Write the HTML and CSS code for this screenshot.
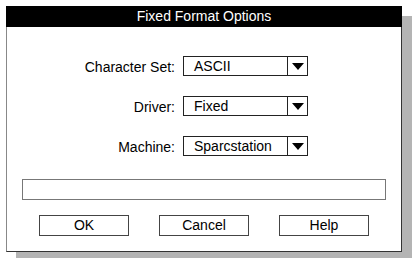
FILE: index.html
```html
<!DOCTYPE html>
<html lang="en">
<head>
  <meta charset="UTF-8" />
  <title>Fixed Format Options</title>
  <link rel="stylesheet" href="styles.css">
</head>
<body>

<div class="dialog">
  <div class="title-bar">Fixed Format Options</div>

  <div class="form">
    <label class="field-label">Character Set:</label>
    <div class="dropdown">
      <span class="dropdown-value">ASCII</span>
      <span class="dropdown-arrow">
        <svg width="12" height="7" viewBox="0 0 12 7"><polygon points="0,0 12,0 6,7" fill="#000"/></svg>
      </span>
    </div>

    <label class="field-label">Driver:</label>
    <div class="dropdown">
      <span class="dropdown-value">Fixed</span>
      <span class="dropdown-arrow">
        <svg width="12" height="7" viewBox="0 0 12 7"><polygon points="0,0 12,0 6,7" fill="#000"/></svg>
      </span>
    </div>

    <label class="field-label">Machine:</label>
    <div class="dropdown">
      <span class="dropdown-value">Sparcstation</span>
      <span class="dropdown-arrow">
        <svg width="12" height="7" viewBox="0 0 12 7"><polygon points="0,0 12,0 6,7" fill="#000"/></svg>
      </span>
    </div>
  </div>

  <div class="status-field"></div>

  <div class="buttons">
    <button class="dlg-btn">OK</button>
    <button class="dlg-btn">Cancel</button>
    <button class="dlg-btn">Help</button>
  </div>
</div>

</body>
</html>
```

FILE: styles.css
```css
body {
  font-family: "Liberation Sans", Arial, sans-serif;
  font-size: 14px;
  background: #fff;
  margin: 0;
  padding: 6px;
  color: #000;
}

.dialog {
  width: 396px;
  height: 246px;
  box-sizing: border-box;
  background: #fff;
  border: 1px solid #333;
  border-left-color: #888;
  border-top: none;
  box-shadow: 10px 10px 0 #b4b4b4;
}

.title-bar {
  height: 21px;
  line-height: 21px;
  margin-left: -1px;
  margin-right: -1px;
  background: #000;
  color: #fff;
  text-align: center;
}

.form {
  display: grid;
  grid-template-columns: 168px 125px;
  grid-auto-rows: 20px;
  column-gap: 8px;
  row-gap: 20px;
  align-items: center;
  padding-top: 29px;
}

.field-label {
  text-align: right;
  line-height: 20px;
  position: relative;
  top: 1px;
}

.dropdown {
  display: flex;
  height: 20px;
  box-sizing: border-box;
  border: 1px solid #222;
}

.dropdown-value {
  flex: 1;
  padding-left: 10px;
  line-height: 19px;
}

.dropdown-arrow {
  width: 19px;
  border-left: 1px solid #222;
  display: flex;
  align-items: center;
  justify-content: center;
}

.status-field {
  height: 21px;
  box-sizing: border-box;
  margin: 23px 15px 0 15px;
  border: 1px solid #777;
}

.buttons {
  display: flex;
  justify-content: center;
  gap: 30px;
  margin-top: 15px;
}

.dlg-btn {
  width: 90px;
  height: 21px;
  padding: 0;
  background: #fff;
  border: 1px solid #444;
  border-radius: 0;
  font-family: "Liberation Sans", Arial, sans-serif;
  font-size: 14px;
  color: #000;
  line-height: 19px;
}
```
